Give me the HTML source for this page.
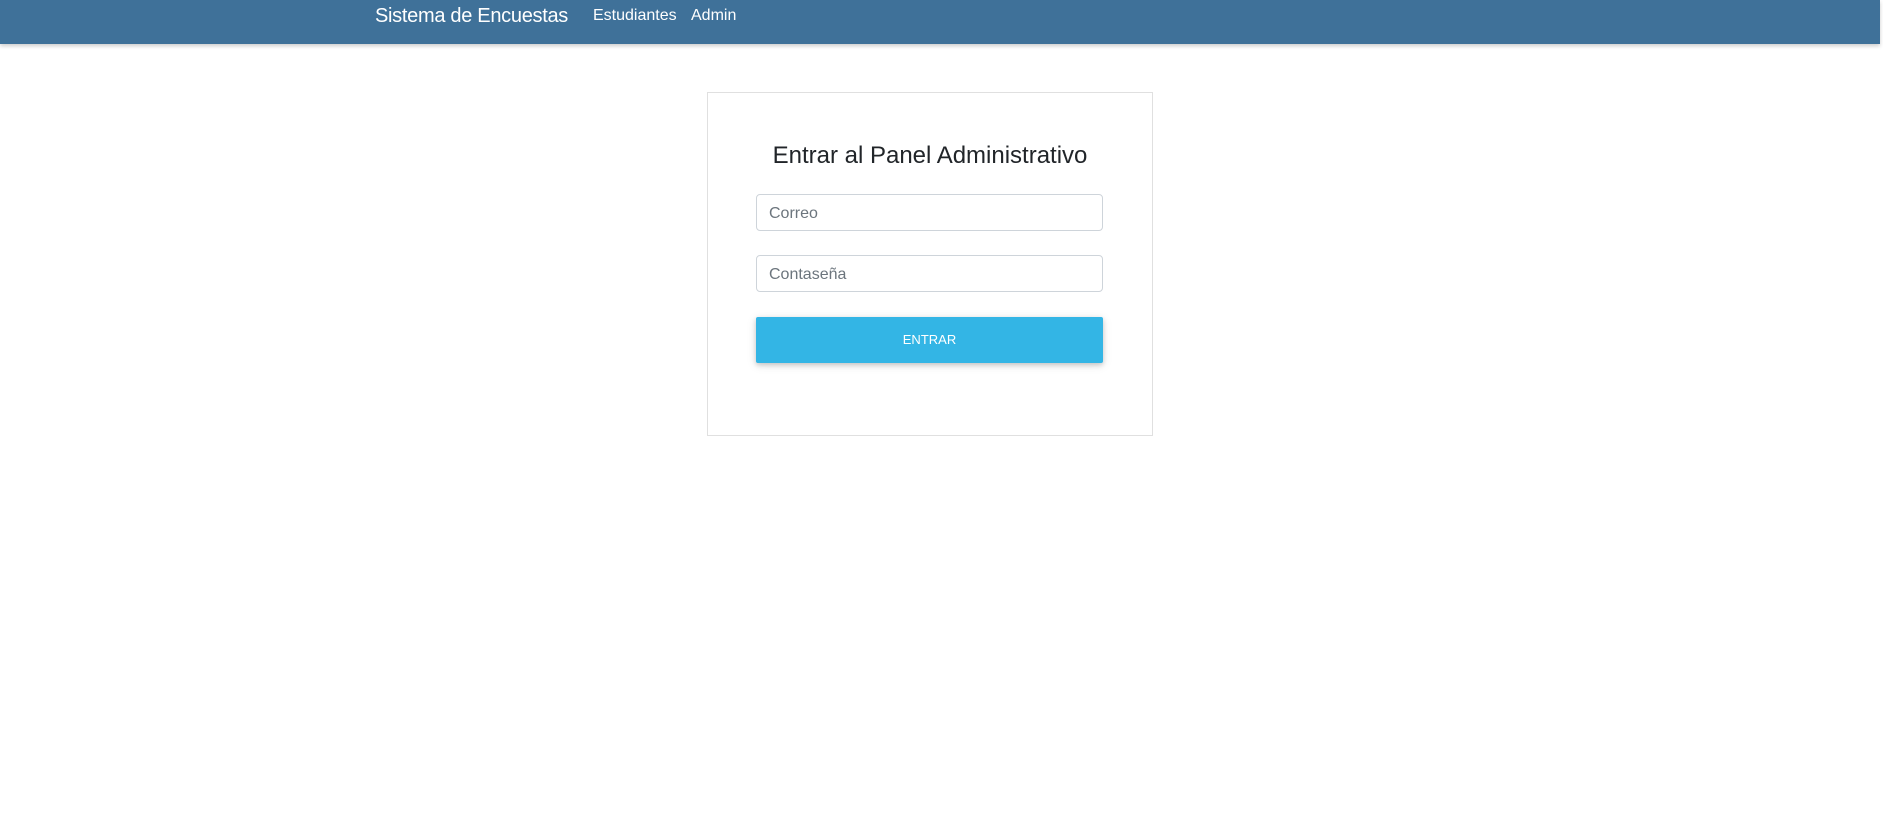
<!DOCTYPE html>
<html><head><meta charset="utf-8"><style>
body{margin:0;width:1883px;height:819px;background:#fff;font-family:"Liberation Sans",sans-serif;overflow:hidden;position:relative}
.nav{position:absolute;left:0;top:0;width:1880px;height:44px;background:#3f7199;box-shadow:0 2px 4px rgba(0,0,0,.2)}
.nav span{position:absolute;color:#fff;white-space:nowrap}
.brand{left:375px;top:5px;font-size:20px;letter-spacing:-.3px}
.l1{left:593px;top:7px;font-size:16px}
.l2{left:691px;top:7px;font-size:16px}
.card{position:absolute;left:707px;top:92px;width:444px;height:342px;border:1px solid #e0e0e0}
h1{position:absolute;left:707px;width:446px;top:142px;margin:0;text-align:center;font-size:24px;font-weight:400;color:#212529}
.in{position:absolute;left:756px;height:35px;border:1px solid #ced4da;border-radius:4px;color:#6c757d;font-size:16px;line-height:37px;padding-left:12px}
.btn{position:absolute;left:756px;top:317px;width:347px;height:46px;background:#33b5e5;border-radius:2px;box-shadow:0 2px 5px rgba(0,0,0,.16),0 2px 10px rgba(0,0,0,.12);color:#fff;font-size:13px;text-align:center;line-height:46px}
</style></head><body>
<div class="nav"><span class="brand">Sistema de Encuestas</span><span class="l1">Estudiantes</span><span class="l2">Admin</span></div>
<div class="card"></div>
<h1>Entrar al Panel Administrativo</h1>
<div class="in" style="top:194px;width:333px">Correo</div>
<div class="in" style="top:255px;width:333px">Contaseña</div>
<div class="btn">ENTRAR</div>
</body></html>
